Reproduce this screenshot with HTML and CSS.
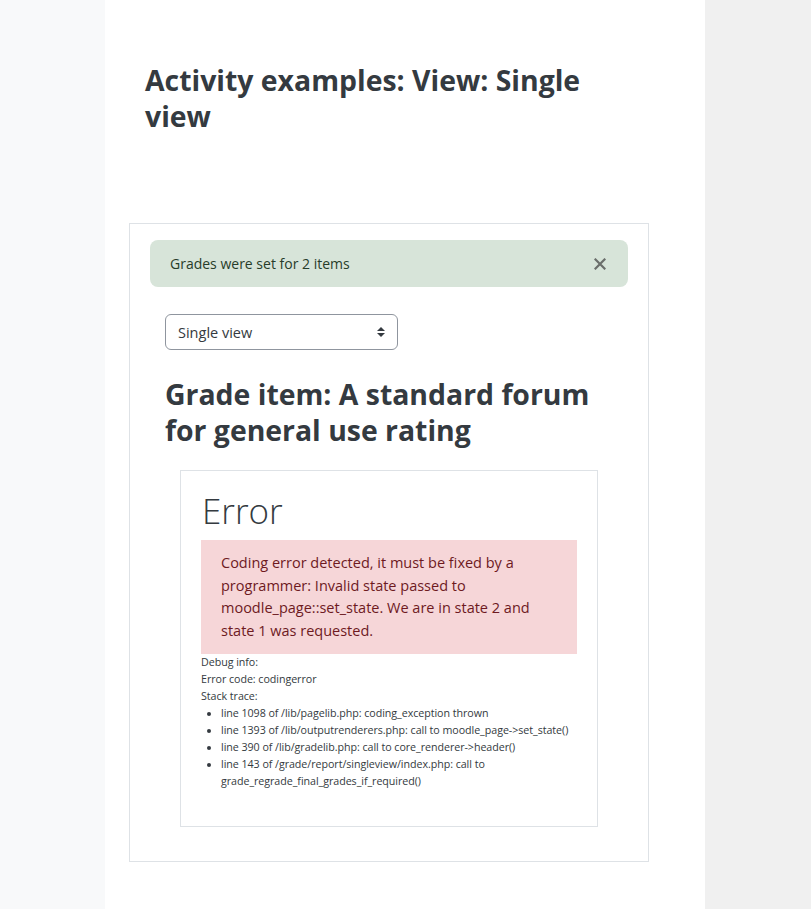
FILE: index.html
```html
<!DOCTYPE html>
<html>
<head>
<meta charset="utf-8">
<link rel="stylesheet" href="styles.css">
</head>
<body>
<div class="page">
  <div class="left-strip"></div>
  <main class="main">
    <h1 class="page-title">Activity examples: View: Single view</h1>
    <section class="region">
      <div class="alert-success">
        <span>Grades were set for 2 items</span>
        <span class="close">
          <svg width="12" height="12" viewBox="0 0 12 12"><path d="M1.5 1.5 L10.5 10.5 M10.5 1.5 L1.5 10.5" stroke="#6a6e6b" stroke-width="2.2" stroke-linecap="square"/></svg>
        </span>
      </div>
      <div class="inner">
        <div class="select">
          <span>Single view</span>
          <svg class="caret" width="8" height="12" viewBox="0 0 8 12"><path d="M4 1 L8 5 H0 Z M0 7 H8 L4 11 Z" fill="#343a40"/></svg>
        </div>
        <h2 class="item-title">Grade item: A standard forum for general use rating</h2>
        <div class="error-box">
          <h3 class="error-title">Error</h3>
          <div class="alert-danger">Coding error detected, it must be fixed by a programmer: Invalid state passed to moodle_page::set_state. We are in state 2 and state 1 was requested.</div>
          <div class="debug">
            <div>Debug info:</div>
            <div>Error code: codingerror</div>
            <div>Stack trace:</div>
            <ul>
              <li>line 1098 of /lib/pagelib.php: coding_exception thrown</li>
              <li>line 1393 of /lib/outputrenderers.php: call to moodle_page-&gt;set_state()</li>
              <li>line 390 of /lib/gradelib.php: call to core_renderer-&gt;header()</li>
              <li>line 143 of /grade/report/singleview/index.php: call to grade_regrade_final_grades_if_required()</li>
            </ul>
          </div>
        </div>
      </div>
    </section>
  </main>
  <div class="right-strip"></div>
</div>
</body>
</html>
```
FILE: styles.css
```css
* { box-sizing: border-box; }
html, body { margin: 0; padding: 0; }
body {
  font-family: "Open Sans", "Noto Sans", "Liberation Sans", sans-serif;
  color: #343a40;
  background: #f8f9fa;
}
.page {
  display: flex;
  min-height: 909px;
}
.left-strip { width: 105px; flex: none; background: #f8f9fa; }
.right-strip { flex: 1; background: #f0f0f0; }
.main {
  width: 600px;
  flex: none;
  background: #fff;
  padding: 62px 0 0 24px;
}
.page-title {
  margin: 0 0 0 16px;
  width: 470px;
  font-size: 28.4px;
  line-height: 36px;
  font-weight: 700;
  color: #343a40;
}
.region {
  margin-top: 89px;
  width: 520px;
  border: 1px solid #dee2e6;
  padding: 16px 20px 34px 20px;
}
.alert-success {
  height: 47px;
  background: #d7e4d9;
  border-radius: 8px;
  padding: 0 22px 0 20px;
  display: flex;
  align-items: center;
  justify-content: space-between;
  font-size: 14px;
  color: #273c2a;
}
.close { display: flex; align-items: center; }
.inner { padding-left: 15px; }
.select {
  margin-top: 27px;
  width: 233px;
  height: 36px;
  border: 1px solid #8f959e;
  border-radius: 6px;
  display: flex;
  align-items: center;
  justify-content: space-between;
  padding: 0 12px 0 12px;
  font-size: 14.5px;
  color: #343a40;
}
.item-title {
  margin: 26px 0 0 0;
  font-size: 28.4px;
  line-height: 36px;
  font-weight: 700;
  color: #343a40;
}
.error-box {
  margin: 22px 0 0 15px;
  width: 418px;
  border: 1px solid #dee2e6;
  padding: 18px 20px 36px 20px;
}
.error-title {
  margin: 0;
  font-size: 35px;
  line-height: 44px;
  font-weight: 300;
  color: #343a40;
  padding-left: 1px;
}
.alert-danger {
  margin-top: 7px;
  background: #f6d6d8;
  color: #6e1a1f;
  font-size: 14.5px;
  line-height: 22.5px;
  padding: 12px 20px;
}
.debug {
  font-size: 10.7px;
  line-height: 17px;
  letter-spacing: -0.05px;
  color: #343a40;
}
.debug ul {
  margin: 0;
  padding-left: 20px;
}
```
